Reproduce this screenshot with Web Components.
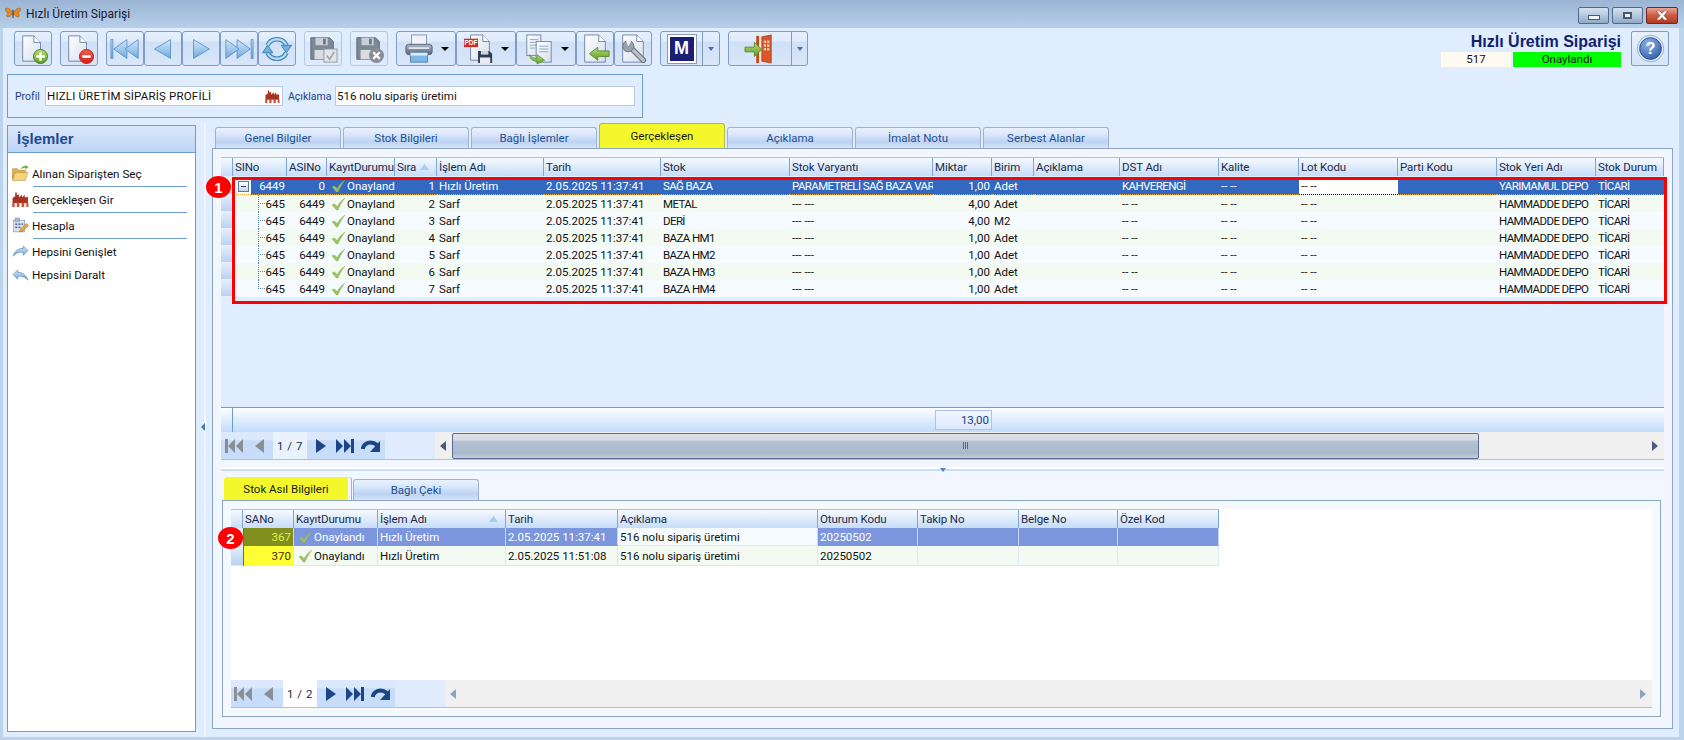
<!DOCTYPE html>
<html lang="tr">
<head>
<meta charset="utf-8">
<title>Hızlı Üretim Siparişi</title>
<style>
    html, body { margin: 0; padding: 0; }
    body {
        width: 1684px;
        height: 740px;
        overflow: hidden;
        position: relative;
        background: #e0edfe;
        font-family: Roboto, "Liberation Sans", Arial, sans-serif;
        font-size: 11.5px;
        color: #111;
    }
</style>
</head>
<body>
<app-window></app-window>
<mark-box x="232" y="177" w="1435" h="127"></mark-box>
<mark-badge x="206" y="176" n="1"></mark-badge>
<mark-badge x="218" y="527" n="2"></mark-badge>

<script>
const DEFS = `<defs>
<linearGradient id="doc" x1="0" y1="0" x2="1" y2="1"><stop offset="0" stop-color="#fff"/><stop offset="1" stop-color="#d5dfec"/></linearGradient>
<linearGradient id="blue" x1="0" y1="0" x2="0" y2="1"><stop offset="0" stop-color="#d4e8fa"/><stop offset="1" stop-color="#6fa9dc"/></linearGradient>
<linearGradient id="green" x1="0" y1="0" x2="0" y2="1"><stop offset="0" stop-color="#b9dc72"/><stop offset="1" stop-color="#5f9c2c"/></linearGradient>
<linearGradient id="red" x1="0" y1="0" x2="0" y2="1"><stop offset="0" stop-color="#f4604c"/><stop offset="1" stop-color="#d81a14"/></linearGradient>
<linearGradient id="steel" x1="0" y1="0" x2="0" y2="1"><stop offset="0" stop-color="#aeb8c6"/><stop offset="1" stop-color="#56657a"/></linearGradient>
<radialGradient id="ball" cx=".4" cy=".3" r=".8"><stop offset="0" stop-color="#8fb4e8"/><stop offset="1" stop-color="#2a5aa8"/></radialGradient>
</defs>`;

const docShape = (x, y, w, h) => `<path d="M${x} ${y}h${w - 7}l7 7v${h - 7}h-${w}z" fill="url(#doc)" stroke="#6d84a8"/><path d="M${x + w - 7} ${y}v7h7" fill="#fff" stroke="#6d84a8"/>`;
const floppy = `<path d="M3 4h20l4 4v19H3z" fill="#7c8894" stroke="#5f6a75"/><rect x="8" y="4" width="13" height="8" fill="#c9d0d8"/><rect x="16" y="5" width="3" height="6" fill="#6a7682"/><rect x="7" y="17" width="16" height="10" fill="#d9dde2"/>`;
const fwd = `<path d="M1 12C3 6 8 3 12 4V1l5 5-5 5V8C8 7 4 9 1 12z" fill="url(#blue)" stroke="#5f8fc4" stroke-width=".8"/>`;

const ICONS = {
    butterfly: `<path d="M15 15C12 6 6 3 1 5c0 5 2 8 6 9-3 1-4 4-3 7 4 2 8-1 11-6z" fill="#e88a1c" stroke="#8a4a10" stroke-width="1"/><path d="M17 15C20 6 26 3 31 5c0 5-2 8-6 9 3 1 4 4 3 7-4 2-8-1-11-6z" fill="#e88a1c" stroke="#8a4a10" stroke-width="1"/><rect x="15" y="7" width="2" height="17" rx="1" fill="#3a2a18"/>`,
    add: docShape(5, 2, 19, 27) + `<circle cx="24" cy="24" r="7.500" fill="url(#green)" stroke="#4a7a20"/><path d="M24 19.500v9M19.500 24h9" stroke="#fff" stroke-width="2.600"/>`,
    remove: docShape(5, 2, 19, 27) + `<circle cx="24" cy="24" r="7.500" fill="url(#red)" stroke="#b02018"/><path d="M19.500 24h9" stroke="#fff" stroke-width="2.800"/>`,
    first: `<g fill="url(#blue)" stroke="#5b96cc"><rect x="1" y="6" width="2" height="20"/><path d="M4 16 18 6v20z"/><path d="M16 16 30 6v20z"/></g>`,
    prev: `<path d="M7 16 24 6v20z" fill="url(#blue)" stroke="#5b96cc"/>`,
    next: `<path d="M25 16 8 6v20z" fill="url(#blue)" stroke="#5b96cc"/>`,
    last: `<g fill="url(#blue)" stroke="#5b96cc"><rect x="29" y="6" width="2" height="20"/><path d="M28 16 14 6v20z"/><path d="M16 16 2 6v20z"/></g>`,
    refresh: `<g fill="none" stroke-linecap="butt"><path d="M6 12A11 11 0 0 1 26 12" stroke="#3b7fb5" stroke-width="5"/><path d="M26 20A11 11 0 0 1 6 20" stroke="#3b7fb5" stroke-width="5"/><path d="M6 12A11 11 0 0 1 26 12" stroke="#b5daf2" stroke-width="2.500"/><path d="M26 20A11 11 0 0 1 6 20" stroke="#b5daf2" stroke-width="2.500"/></g><path d="M20.500 12h11L26 20z" fill="#6fb0e0" stroke="#3b7fb5"/><path d="M.5 20h11L6 12z" fill="#6fb0e0" stroke="#3b7fb5"/>`,
    savecheck: floppy + `<rect x="17" y="16" width="14" height="14" fill="#e2e5e8" stroke="#8f979f"/><path d="M20 23l3 4 5-8" fill="none" stroke="#9aa2aa" stroke-width="1.600"/>`,
    savex: floppy + `<circle cx="24" cy="23" r="8" fill="#858d95"/><path d="M20.500 19.500l7 7M27.500 19.500l-7 7" stroke="#fff" stroke-width="2.500"/>`,
    print: `<rect x="8" y="1" width="16" height="11" fill="#f0f3f7" stroke="#8395ad"/><rect x="2" y="11" width="28" height="11" rx="3" fill="url(#steel)" stroke="#56657a"/><rect x="5" y="14" width="22" height="2" fill="#dfe5ec"/><rect x="7" y="20" width="18" height="10" fill="#7ab8ea" stroke="#5b7fa8"/><rect x="7" y="20" width="18" height="3" fill="#dcebf8"/>`,
    pdf: docShape(7, 1, 20, 27) + `<rect x="0" y="5" width="15" height="9" fill="#d42a24"/><text x="7.500" y="12" font-family="Liberation Sans" font-size="7" font-weight="700" fill="#fff" text-anchor="middle">PDF</text><path d="M15 18h12l3 3v10H15z" fill="#2f3a4c"/><rect x="18" y="18" width="8" height="4" fill="#cdd5df"/><rect x="17" y="25" width="11" height="6" fill="#e8ecf0"/>`,
    copy: `<rect x="3" y="1" width="15" height="22" fill="url(#doc)" stroke="#7088ab"/><path d="M6 6h9M6 9h9M6 12h9M6 15h6" stroke="#8fa6c6"/><rect x="13" y="8" width="16" height="22" fill="url(#doc)" stroke="#7088ab"/><path d="M16 13h10M16 16h10M16 19h10" stroke="#8fa6c6"/><path d="M6 22c2 3 4 4 8 4v-4l8 6-8 4v-3c-5 0-8-3-8-7z" fill="url(#green)" stroke="#5d8c2c" stroke-width=".8"/>`,
    back: docShape(5, 1, 22, 29) + `<path d="M10 21l9-7v4h12v6H19v4z" fill="url(#green)" stroke="#5d8c2c"/>`,
    wrench: docShape(5, 1, 22, 29) + `<path d="M13 14l14 14" stroke="#6a7480" stroke-width="6" stroke-linecap="round"/><path d="M13 14l14 14" stroke="#b8c0c8" stroke-width="3.500" stroke-linecap="round"/><circle cx="11" cy="13" r="6" fill="#98a2ac" stroke="#6a7480"/><path d="M11 13 8 6h7z" fill="#eef3fa"/>`,
    door: `<rect x="12" y="2" width="3" height="29" fill="#c2471f"/><rect x="15" y="3" width="3" height="26" fill="#f0e4d0"/><path d="M18 3l10-2v30l-10-2z" fill="#d9552a" stroke="#a83a18" stroke-width=".8"/><g fill="#e2d4b4"><rect x="20" y="7" width="2.500" height="2.500"/><rect x="23.500" y="7" width="2.500" height="2.500"/><rect x="20" y="11" width="2.500" height="2.500"/><rect x="23.500" y="11" width="2.500" height="2.500"/><rect x="20" y="15" width="2.500" height="2.500"/><rect x="23.500" y="15" width="2.500" height="2.500"/></g><path d="M0 14h10V9l8 7.500-8 7.500v-5H0z" fill="url(#green)" stroke="#5d8c2c"/>`,
    help: `<circle cx="16" cy="16" r="14.500" fill="#e6eef8" stroke="#8fa8c8"/><circle cx="16" cy="16" r="12" fill="url(#ball)" stroke="#2a4f90"/><text x="16" y="22" font-family="Liberation Sans" font-size="18" font-weight="700" fill="#fff" text-anchor="middle">?</text>`,
    factory: `<path d="M1 30V13l5-3V3h3v5l4-2v6l6-5v5l5-5v5l6-1v19z" fill="#a83222"/><rect x="1" y="22" width="30" height="8" fill="#c8553e"/><g fill="#fff"><rect x="5" y="23" width="4" height="7"/><rect x="14" y="23" width="4" height="7"/><rect x="23" y="23" width="4" height="7"/></g>`,
    folder: `<path d="M1 7h9l2 3h13v5H6L1 27z" fill="#e2b24c" stroke="#a87a20"/><path d="M6 14h24l-5 15H1z" fill="#f6d47e" stroke="#b88a2c"/><path d="M17 8c1-4 4-6 8-6V0l6 4-6 4V5c-3 0-6 1-8 3z" fill="#6fa836"/>`,
    calc: `<rect x="3" y="6" width="21" height="22" fill="#dbe4f2" stroke="#6d7fa0"/><rect x="6" y="2" width="8" height="6" fill="#aebbd0" stroke="#6d7fa0"/><g fill="#5a6f98"><rect x="6" y="12" width="4" height="3"/><rect x="12" y="12" width="4" height="3"/><rect x="18" y="12" width="3" height="3"/><rect x="6" y="18" width="4" height="3"/><rect x="12" y="18" width="4" height="3"/></g><path d="M14 28l2-5 11-11 4 4-11 11z" fill="#e8a83c" stroke="#9a6a18"/>`,
    expand: fwd,
    collapse: `<g transform="matrix(-1 0 0 1 18 0)">${fwd}</g>`,
    check: `<path d="M1 8l3-1 3 3c2-4 5-7 9-10-3 4-6 9-8 14H6z" fill="#9cc266" stroke="#7fa648" stroke-width=".4"/>`,
    navfirst: `<path d="M0 0h3v14H0zM3 7l7-7v14zM11 7l7-7v14z"/>`,
    navprev: `<path d="M0 7l9-7v14z"/>`,
    navnext: `<path d="M0 0l10 7-10 7z"/>`,
    navlast: `<path d="M0 0l7 7-7 7zM8 0l7 7-7 7zM15 0h3v14h-3z"/>`,
    navrefresh: `<path d="M1.800 10C2.500 4 10 1 16 6" fill="none" stroke="currentColor" stroke-width="4"/><path d="M9 13h10V2z"/>`
};

const VIEWBOX = { check: "0 0 16 14", expand: "0 0 18 14", collapse: "0 0 18 14", navfirst: "0 0 18 14", navprev: "0 0 9 14", navnext: "0 0 10 14", navlast: "0 0 18 14", navrefresh: "0 0 19 14" };

class AppIcon extends HTMLElement {
    connectedCallback() {
        const name = this.getAttribute("name");
        const w = this.getAttribute("w") || 32;
        const h = this.getAttribute("h") || w;
        const box = VIEWBOX[name] || "0 0 32 32";
        this.attachShadow({ mode: "open" }).innerHTML = `
            <style>
                :host { display: inline-flex; flex: none; }
                svg { display: block; overflow: visible; }
            </style>
            <svg xmlns="http://www.w3.org/2000/svg" width="${w}" height="${h}" viewBox="${box}" fill="currentColor">${DEFS}${ICONS[name]}</svg>`;
    }
}
customElements.define("app-icon", AppIcon);

class TitleBar extends HTMLElement {
    constructor() {
        super();
        this.attachShadow({ mode: "open" }).innerHTML = `
            <style>
                :host {
                    display: flex;
                    align-items: center;
                    gap: 5px;
                    height: 28px;
                    padding: 0 6px 0 5px;
                    box-sizing: border-box;
                    background: linear-gradient(#9bb4d3, #b6cfe9);
                    font-size: 12px;
                    color: #1a1a2a;
                }
                .name { flex: 1; }
                .ctl { display: flex; gap: 3px; margin-top: 3px; }
                .ctl span {
                    width: 31px; height: 17px; box-sizing: border-box;
                    border: 1px solid #4f6a8c; border-radius: 2px;
                    background: linear-gradient(#d4e1ef, #b4c9df 50%, #8fa9c6);
                    display: flex; align-items: center; justify-content: center;
                }
                .ctl i { display: block; }
                .min i { width: 10px; height: 3px; margin-top: 4px; background: #eef3f8; border: 1px solid #4a5a70; }
                .max i { width: 5px; height: 3px; border: 2px solid #4a5a70; background: #eef3f8; }
                .ctl .close { width: 32px; background: linear-gradient(#e8a595, #cf5a42 50%, #b23a22); border-color: #6e2a1c; }
            </style>
            <app-icon name="butterfly" w="16"></app-icon>
            <span class="name">Hızlı Üretim Siparişi</span>
            <div class="ctl">
                <span class="min"><i></i></span>
                <span class="max"><i></i></span>
                <span class="close">
                    <svg width="14" height="9" viewBox="0 0 14 9"><path d="M1 0h4l2 2.500L9 0h4L9 4.500 13 9H9L7 6.500 5 9H1l4-4.500z" fill="#fff" stroke="#5a3a30" stroke-width=".6"/></svg>
                </span>
            </div>`;
    }
}
customElements.define("title-bar", TitleBar);

class ToolButton extends HTMLElement {
    connectedCallback() {
        const icon = this.getAttribute("icon");
        const w = this.getAttribute("w") || 38;
        const caret = this.getAttribute("caret");
        const split = this.getAttribute("split");
        const size = this.getAttribute("size") || 30;
        this.attachShadow({ mode: "open" }).innerHTML = `
            <style>
                :host {
                    display: flex;
                    width: ${w}px;
                    height: 35px;
                    box-sizing: border-box;
                    border: 1px solid #7f9cc6;
                    border-radius: 3px;
                    background: linear-gradient(#e6f0fd, #deebfb 28%, #cfe0f6 30%, #d9e6f9);
                    align-items: center;
                    justify-content: center;
                }
                :host([disabled]) {
                    border-color: #b7c8e0;
                    background: linear-gradient(#e6f0fd, #e1edfd 30%, #d9e7fa 32%, #e0ecfd);
                }
                .main { flex: 1; display: flex; align-items: center; justify-content: center; height: 100%; }
                .caret { width: 0; height: 0; border: 4px solid transparent; border-top: 4px solid #000; border-bottom: 0; margin: 0 6px 0 0; }
                .split { width: 15px; height: 100%; border-left: 1px solid #7f9cc6; display: flex; align-items: center; justify-content: center; }
                .split i { width: 0; height: 0; border: 3px solid transparent; border-top: 4px solid #4a6ea5; border-bottom: 0; }
            </style>
            <div class="main"><app-icon name="${icon}" w="${size}"></app-icon></div>
            ${caret !== null ? '<div class="caret"></div>' : ""}
            ${split !== null ? '<div class="split"><i></i></div>' : ""}`;
    }
}
customElements.define("tool-button", ToolButton);

class MarkButton extends HTMLElement {
    constructor() {
        super();
        this.attachShadow({ mode: "open" }).innerHTML = `
            <style>
                :host { display: flex; width: 30px; height: 30px; box-sizing: border-box; border: 1px solid #8a9ab8; padding: 2px; background: #fff; }
                div { flex: 1; background: #1a1f71; color: #fff; font: bold 18px "Liberation Sans", sans-serif; display: flex; align-items: center; justify-content: center; }
            </style>
            <div>M</div>`;
    }
}
customElements.define("mark-button", MarkButton);

class ToolGroup extends HTMLElement {
    constructor() {
        super();
        this.attachShadow({ mode: "open" }).innerHTML = `<style>:host { display: flex; }</style><slot></slot>`;
    }
}
customElements.define("tool-group", ToolGroup);

class ProfilePanel extends HTMLElement {
    constructor() {
        super();
        this.attachShadow({ mode: "open" }).innerHTML = `
            <style>
                :host {
                    display: flex;
                    align-items: center;
                    width: 636px;
                    height: 44px;
                    box-sizing: border-box;
                    margin: 8px 0 0 4px;
                    padding: 0 7px;
                    border: 1px solid #6f9bd3;
                }
                label { color: #1f3f86; white-space: nowrap; font-size: 10.5px; }
                .lp { width: 30px; }
                .la { width: 47px; margin-left: 5px; }
                .box {
                    height: 20px; box-sizing: border-box;
                    border: 1px solid #b8cce6; background: #fff;
                    display: flex; align-items: center; padding: 0 2px 0 1px;
                    color: #111;
                }
                .p { width: 238px; justify-content: space-between; }
                .p span { letter-spacing: .18px; }
                .a { width: 300px; }
            </style>
            <label class="lp">Profil</label>
            <div class="box p"><span>HIZLI ÜRETİM SİPARİŞ PROFİLİ</span><app-icon name="factory" w="15"></app-icon></div>
            <label class="la">Açıklama</label>
            <div class="box a">516 nolu sipariş üretimi</div>`;
    }
}
customElements.define("profile-panel", ProfilePanel);

class StatusHead extends HTMLElement {
    constructor() {
        super();
        this.attachShadow({ mode: "open" }).innerHTML = `
            <style>
                :host { display: flex; gap: 10px; margin: 3px 10px 0 0; align-items: flex-start; }
                .col { display: flex; flex-direction: column; align-items: flex-end; }
                h1 { margin: 0; height: 21px; line-height: 21px; font: bold 16px/21px "Liberation Sans", sans-serif; color: #101f70; }
                .row { display: flex; gap: 2px; }
                .row div { height: 15px; line-height: 15px; text-align: center; color: #111; }
                .no { width: 70px; background: #fffaf0; }
                .st { width: 108px; background: #00ff00; }
                .help {
                    width: 38px; height: 35px; box-sizing: border-box;
                    border: 1px solid #7f9cc6; border-radius: 2px;
                    background: linear-gradient(#e6f0fd, #d5e4f8);
                    display: flex; align-items: center; justify-content: center;
                }
            </style>
            <div class="col">
                <h1>Hızlı Üretim Siparişi</h1>
                <div class="row"><div class="no">517</div><div class="st">Onaylandı</div></div>
            </div>
            <div class="help"><app-icon name="help" w="29"></app-icon></div>`;
    }
}
customElements.define("status-head", StatusHead);

class SidePanel extends HTMLElement {
    constructor() {
        super();
        this.attachShadow({ mode: "open" }).innerHTML = `
            <style>
                :host {
                    display: flex; flex-direction: column;
                    width: 189px; height: 607px; box-sizing: border-box;
                    margin: 2px 0 0 4px;
                    border: 1px solid #6f9bd3;
                    background: #fff;
                }
                h2 {
                    margin: 0; height: 27px; padding-left: 9px; box-sizing: border-box;
                    font: bold 15px/26px "Liberation Sans", sans-serif; color: #1f4a8e;
                    background: linear-gradient(#dbe8fc, #bcd4f4);
                    border-bottom: 1px solid #6f9bd3;
                }
                .list { padding-top: 8px; }
            </style>
            <h2>İşlemler</h2>
            <div class="list"><slot></slot></div>`;
    }
}
customElements.define("side-panel", SidePanel);

class SideItem extends HTMLElement {
    connectedCallback() {
        const icon = this.getAttribute("icon");
        const small = icon === "expand" || icon === "collapse";
        this.attachShadow({ mode: "open" }).innerHTML = `
            <style>
                :host { display: block; height: ${this.getAttribute("h") || 26}px; box-sizing: border-box; font-size: 11.7px; }
                .row { display: flex; align-items: center; height: 25px; padding-left: 3px; gap: 3px; }
                :host([last]) .row { height: 20px; }
                .ic { width: 18px; display: flex; justify-content: center; }
                hr { margin: 0 8px 0 25px; border: 0; border-top: 1px solid #6f9bd3; }
            </style>
            <div class="row">
                <span class="ic"><app-icon name="${icon}" w="17" h="${small ? 13 : 17}"></app-icon></span>
                <slot></slot>
            </div>
            ${this.hasAttribute("sep") ? "<hr>" : ""}`;
    }
}
customElements.define("side-item", SideItem);

class TabStrip extends HTMLElement {
    constructor() {
        super();
        this.attachShadow({ mode: "open" }).innerHTML = `
            <style>
                :host { display: flex; align-items: flex-end; gap: 2px; box-sizing: border-box; }
            </style>
            <slot></slot>`;
    }
}
customElements.define("tab-strip", TabStrip);

class TabItem extends HTMLElement {
    constructor() {
        super();
        this.attachShadow({ mode: "open" }).innerHTML = `
            <style>
                :host {
                    display: flex; align-items: center; justify-content: center;
                    width: 126px; height: 21px; box-sizing: border-box;
                    border: 1px solid #9ab3d4; border-bottom: 0; border-radius: 3px 3px 0 0;
                    background: linear-gradient(#e9f2fe, #dbe8fb 30%, #bdd3f2 70%, #d5e4f8);
                    color: #1f4f91;
                }
                :host([active]) {
                    height: 25px;
                    background: #f4f72c;
                    border-color: #b5b74a;
                    color: #1a1a1a;
                }
                :host([low]) { height: 23px; width: 127px; border: 0; border-right: 3px solid #f2f7ff; box-shadow: 1px 0 0 #9ab3d4; }
            </style>
            <slot></slot>`;
    }
}
customElements.define("tab-item", TabItem);

const upperCols = [
    ["SINo", 54], ["ASINo", 40], ["KayıtDurumu", 68], ["Sıra", 42, "sort"], ["İşlem Adı", 107], ["Tarih", 117], ["Stok", 129], ["Stok Varyantı", 143],
    ["Miktar", 59], ["Birim", 42], ["Açıklama", 86], ["DST Adı", 99], ["Kalite", 80], ["Lot Kodu", 99], ["Parti Kodu", 99], ["Stok Yeri Adı", 99], ["Stok Durum", 68]
];
const lowerCols = [
    ["SANo", 51], ["KayıtDurumu", 84], ["İşlem Adı", 128, "sort"], ["Tarih", 112], ["Açıklama", 200], ["Oturum Kodu", 100], ["Takip No", 101], ["Belge No", 99], ["Özel Kod", 101]
];
const sarf = (sira, stok, miktar, birim) => ["645", "6449", "Onayland", String(sira), "Sarf", "2.05.2025 11:37:41", stok, "--- ---", miktar, birim, "", "-- --", "-- --", "-- --", "", "HAMMADDE DEPO", "TİCARİ"];
const GRIDS = {
    upper: {
        cols: upperCols,
        rowHeight: 17,
        right: [0, 1, 3, 8],
        checkCol: 2,
        treeCol: 0,
        rows: [
            ["6449", "0", "Onayland", "1", "Hızlı Üretim", "2.05.2025 11:37:41", "SAĞ BAZA", "PARAMETRELİ SAĞ BAZA VAR", "1,00", "Adet", "", "KAHVERENGİ", "-- --", "-- --", "", "YARIMAMUL DEPO", "TİCARİ"],
            sarf(2, "METAL", "4,00", "Adet"),
            sarf(3, "DERİ", "4,00", "M2"),
            sarf(4, "BAZA HM1", "1,00", "Adet"),
            sarf(5, "BAZA HM2", "1,00", "Adet"),
            sarf(6, "BAZA HM3", "1,00", "Adet"),
            sarf(7, "BAZA HM4", "1,00", "Adet")
        ],
        selected: 0,
        focusCol: 13
    },
    lower: {
        cols: lowerCols,
        rowHeight: 18,
        right: [0],
        checkCol: 1,
        yellowCol: 0,
        rows: [
            ["367", "Onaylandı", "Hızlı Üretim", "2.05.2025 11:37:41", "516 nolu sipariş üretimi", "20250502", "", "", ""],
            ["370", "Onaylandı", "Hızlı Üretim", "2.05.2025 11:51:08", "516 nolu sipariş üretimi", "20250502", "", "", ""]
        ],
        selected: 0,
        focusCol: 4,
        grid: true
    }
};

// Upper-case names come out wider in Roboto than in the original, so they get tighter spacing
const isCaps = text => /[A-ZÇĞİÖŞÜ]{2}/.test(text) && text === text.toLocaleUpperCase("tr");

class DataGrid extends HTMLElement {
    connectedCallback() {
        const g = GRIDS[this.getAttribute("config")];
        const tpl = "12px " + g.cols.map(c => c[1] + "px").join(" ");
        const head = g.cols.map(c => `<div class="hc">${c[0]}${c[2] ? '<svg class="sort" width="9" height="6" viewBox="0 0 9 6"><path d="M4.500 0 9 6H0z" fill="#a9cbee"/></svg>' : ""}</div>`).join("");
        const rows = g.rows.map((row, r) => {
            const cls = r === g.selected ? "sel" : (r % 2 ? "alt" : "plain");
            const cells = row.map((text, c) => {
                let k = "c";
                let inner = `<span class="t${isCaps(text) ? " caps" : ""}">${text}</span>`;
                if (g.right.includes(c)) k += " r";
                if (c === g.focusCol && r === g.selected) k += " focus";
                if (c === g.yellowCol) k += " yellow";
                if (c === g.checkCol) {
                    k += " chk";
                    inner = `<app-icon name="check" w="14" h="12"></app-icon>${inner}`;
                }
                if (c === g.treeCol) {
                    k += r === g.selected ? " root" : " leaf";
                    if (r === g.selected) inner = `<i class="box"></i>${inner}`;
                    else inner = `<i class="tree${r === g.rows.length - 1 ? " end" : ""}"></i>${inner}`;
                }
                return `<div class="${k}">${inner}</div>`;
            }).join("");
            return `<div class="row ${cls}"><div class="ind"></div>${cells}</div>`;
        }).join("");
        const foot = this.hasAttribute("foot") ? `
            <div class="foot"><div class="fi"></div>${g.cols.map((c, i) => `<div class="${i === 8 ? "sum" : ""}">${i === 8 ? "13,00" : ""}</div>`).join("")}</div>` : "";
        this.attachShadow({ mode: "open" }).innerHTML = `
            <style>
                :host {
                    display: flex; flex-direction: column;
                    box-sizing: border-box;
                    height: ${this.getAttribute("h")}px;
                    background: ${this.getAttribute("bg") || "#e0edfe"};
                    overflow: hidden;
                    --tpl: ${tpl};
                }
                .head, .row, .foot { display: grid; grid-template-columns: var(--tpl); }
                .head { height: 19px; width: max-content; background: linear-gradient(#f6faff, #c6dcf8); border-top: 1px solid #a8c2e4; box-sizing: border-box; flex: none; }
                .hi { border-right: 1px solid #7fa6d8; }
                .hc { display: flex; align-items: center; justify-content: space-between; padding: 0 7px 0 2px; border-right: 1px solid #7fa6d8; color: #1a2a4a; white-space: nowrap; overflow: hidden; letter-spacing: -.1px; }
                .sort { flex: none; }
                .rows { padding-top: ${g.grid ? 0 : 2}px; flex: none; }
                .row { height: ${g.rowHeight}px; }
                .ind { background: linear-gradient(#e5eefb, #b9d2f3); border-bottom: 1px solid #e8f1fd; }
                .c { display: flex; align-items: center; padding: 0 2px; overflow: hidden; white-space: nowrap; box-sizing: border-box; }
                .c.r { justify-content: flex-end; }
                .c.chk { padding-left: 4px; gap: 2px; }
                .t { flex: none; }
                .t.caps { letter-spacing: -.6px; }
                .plain .c { background: #f6fbff; }
                .alt .c { background: #f2faf2; }
                .sel .c { background: #3268c0; color: #fff; border-bottom: 1px dotted #e8a13c; }
                .sel .c.focus { background: #fff; color: #111; border-bottom: 1px dotted #000; }
                .sel .c.root { background: linear-gradient(90deg, #f6fbff 18px, #3268c0 18px); border-bottom: 1px dotted #e8a13c; justify-content: flex-end; }
                .box { width: 9px; height: 9px; margin-right: auto; margin-left: 3px; border: 1px solid #5a7aa5; background: linear-gradient(90deg, transparent 2px, #25416e 2px, #25416e 7px, transparent 7px) center / 100% 1px no-repeat, linear-gradient(#fff, #c9d6e8); }
                .leaf { justify-content: flex-end; }
                .tree { width: 8px; height: 100%; flex: none; align-self: stretch;
                    background:
                        repeating-linear-gradient(#5a80b0 0 1px, transparent 1px 2px) left top / 1px 100% no-repeat,
                        repeating-linear-gradient(90deg, #5a80b0 0 1px, transparent 1px 2px) left 8px / 100% 1px no-repeat; }
                .tree.end { background:
                        repeating-linear-gradient(#5a80b0 0 1px, transparent 1px 2px) left top / 1px 9px no-repeat,
                        repeating-linear-gradient(90deg, #5a80b0 0 1px, transparent 1px 2px) left 8px / 100% 1px no-repeat; }
                .leaf .tree { margin-left: 25px; margin-right: auto; }
                ${g.grid ? `
                .row .c { border-right: 1px solid #dbe8fb; border-bottom: 1px solid #dbe8fb; }
                .sel .c { background: #7b96dc; border-bottom: 1px solid #7b96dc; border-right-color: #c8d6f2; }
                .sel .c.focus { background: #f6fbff; color: #111; border-bottom: 1px solid #dbe8fb; }
                .c.yellow { background: #ffff33; color: #4a2a10; border-left: 1px solid #5a7a3a; }
                .alt .c.yellow { height: 20px; border-bottom: 0; }
                .sel .c.yellow { background: #808f1e; color: #e8ee4a; border-bottom: 0; }
                .row { box-sizing: border-box; }
                .ind { border-bottom: 1px solid #dbe8fb; }
                ` : ""}
                .fill { flex: 1; border-bottom: ${this.hasAttribute("foot") ? "1px solid #6f9bd3" : "0"}; }
                .foot { height: 24px; box-sizing: border-box; flex: none; background: linear-gradient(#fdfeff, #c3dbfb); }
                .fi { border-right: 1px solid #6f9bd3; }
                .sum { margin: 2px 0 2px 2px; box-sizing: border-box; border: 1px solid #a9c4e8; background: linear-gradient(#f0f6ff, #dce9fc); color: #1e3a8a; text-align: right; padding-right: 2px; line-height: 18px; }
            </style>
            <div class="head"><div class="hi"></div>${head}</div>
            <div class="rows">${rows}</div>
            <div class="fill"></div>
            ${foot}
            <slot></slot>`;
    }
}
customElements.define("data-grid", DataGrid);

class GridNav extends HTMLElement {
    connectedCallback() {
        const dim = this.hasAttribute("dim");
        this.attachShadow({ mode: "open" }).innerHTML = `
            <style>
                :host { display: flex; height: 28px; flex: none; box-sizing: border-box; border-bottom: 1px solid #a9c0de; background: #e0ecfd; }
                .grp { display: flex; align-items: center; box-sizing: border-box; background: linear-gradient(#dce9fc 30%, #c6dcf8 32%, #c8ddf8); }
                .a { width: 52px; padding-left: ${dim ? 3 : 4}px; gap: 12px; color: #8a8f95; }
                .p { width: 34px; display: flex; align-items: center; justify-content: center; background: ${dim ? "#fff" : "#eaf2fe"}; color: #1a2a4a; letter-spacing: .5px; }
                .b { width: 78px; padding-left: 9px; gap: 10px; color: #1c4587; }
                .b app-icon:last-child { margin-left: -3px; }
                .gap { width: 50px; }
                .track { flex: 1; display: flex; align-items: center; background: #f0f0f0; color: ${dim ? "#8fa0c4" : "#4a5a80"}; padding: 0 6px 0 5px; box-sizing: border-box; }
                .thumb {
                    width: 1027px; height: 26px; margin-left: 6px; box-sizing: border-box;
                    border: 1px solid #5a6a96; border-radius: 2px;
                    background: linear-gradient(#dfe2e6, #d7dade 25%, #b4c2d6 30%, #a9b9cc 80%, #c4ced9);
                    display: flex; align-items: center; justify-content: center;
                }
                .grip { width: 6px; height: 7px; background: repeating-linear-gradient(90deg, #5a6a80 0 1px, transparent 1px 2px); }
                .end { margin-left: auto; }
            </style>
            <div class="grp a"><app-icon name="navfirst" w="18" h="14"></app-icon><app-icon name="navprev" w="9" h="14"></app-icon></div>
            <div class="p">${this.getAttribute("pos")}</div>
            <div class="grp b"><app-icon name="navnext" w="10" h="14"></app-icon><app-icon name="navlast" w="18" h="14"></app-icon><app-icon name="navrefresh" w="19" h="14"></app-icon></div>
            <div class="gap"></div>
            <div class="track">
                <svg width="6" height="10" viewBox="0 0 6 10"><path d="M6 0v10L0 5z" fill="currentColor"/></svg>
                ${dim ? "" : '<div class="thumb"><div class="grip"></div></div>'}
                <svg class="end" width="6" height="10" viewBox="0 0 6 10"><path d="M0 0v10l6-5z" fill="currentColor"/></svg>
            </div>`;
    }
}
customElements.define("grid-nav", GridNav);

class SplitBar extends HTMLElement {
    constructor() {
        super();
        this.attachShadow({ mode: "open" }).innerHTML = `
            <style>
                :host { display: flex; flex: none; height: 17px; align-items: flex-start; justify-content: center; }
                div { width: 100%; height: 4px; margin-top: 7px; display: flex; justify-content: center; background: linear-gradient(#fff 50%, #c8dffa 50%); }
                i { width: 0; height: 0; margin-top: 1px; border: 3px solid transparent; border-top: 4px solid #5a80b8; border-bottom: 0; }
            </style>
            <div><i></i></div>`;
    }
}
customElements.define("split-bar", SplitBar);

class MarkBox extends HTMLElement {
    connectedCallback() {
        const a = n => this.getAttribute(n);
        this.attachShadow({ mode: "open" }).innerHTML = `
            <style>
                :host { position: absolute; left: ${a("x")}px; top: ${a("y")}px; width: ${a("w")}px; height: ${a("h")}px; box-sizing: border-box; border: 3px solid #f00; }
            </style>`;
    }
}
customElements.define("mark-box", MarkBox);

class MarkBadge extends HTMLElement {
    connectedCallback() {
        const a = n => this.getAttribute(n);
        this.attachShadow({ mode: "open" }).innerHTML = `
            <style>
                :host { position: absolute; left: ${a("x")}px; top: ${a("y")}px; width: 25px; height: 22px; border-radius: 50%; background: #f00; color: #fff; font: bold 15px "Liberation Sans", sans-serif; display: flex; align-items: center; justify-content: center; }
            </style>${a("n")}`;
    }
}
customElements.define("mark-badge", MarkBadge);

class MarkSplit extends HTMLElement {
    constructor() {
        super();
        this.attachShadow({ mode: "open" }).innerHTML = `
            <style>
                :host {
                    display: flex; width: 60px; height: 35px; box-sizing: border-box;
                    border: 1px solid #7f9cc6; border-radius: 3px;
                    background: linear-gradient(#e6f0fd, #deebfb 28%, #cfe0f6 30%, #d9e6f9);
                }
                .main { flex: 1; display: flex; align-items: center; justify-content: center; }
                .split { width: 16px; border-left: 1px solid #7f9cc6; display: flex; align-items: center; justify-content: center; }
                .split i { width: 0; height: 0; border: 3px solid transparent; border-top: 4px solid #4a6ea5; border-bottom: 0; }
            </style>
            <div class="main"><mark-button></mark-button></div>
            <div class="split"><i></i></div>`;
    }
}
customElements.define("mark-split", MarkSplit);

class AppWindow extends HTMLElement {
    constructor() {
        super();
        this.attachShadow({ mode: "open" }).innerHTML = `
            <style>
                :host { display: flex; flex-direction: column; width: 1684px; height: 740px; }
                .frame {
                    flex: 1; display: flex; flex-direction: column; min-height: 0;
                    border-left: 3px solid #bcd3ec; border-right: 5px solid #bcd3ec; border-bottom: 3px solid #bcd3ec;
                    background: #e0edfe;
                }
                .top { display: flex; justify-content: space-between; height: 95px; flex: none; }
                .tools { display: flex; gap: 8px; margin: 3px 0 0 11px; }
                .body { flex: 1; display: flex; min-height: 0; }
                .grip {
                    width: 16px; flex: none; display: flex; justify-content: flex-end; padding: 300px 7px 0 0; box-sizing: border-box; height: 100%;
                    background: linear-gradient(90deg, transparent 8px, #f2f7ff 8px, #f2f7ff 10px, transparent 10px);
                    color: #4a7ab8;
                }
                .main { width: 1461px; height: 606px; display: flex; flex-direction: column; }
                .main > tab-strip { height: 25px; padding-left: 3px; flex: none; }
                .panel {
                    flex: 1; min-height: 0; box-sizing: border-box; display: flex; flex-direction: column;
                    border: 1px solid #8ba4c8; background: #f2f7ff; padding: 8px 8px 0 8px;
                }
                .lower { margin: 0 3px 0 1px; display: flex; flex-direction: column; }
                .lower tab-strip { height: 23px; padding-left: 2px; flex: none; }
                .sub { height: 217px; box-sizing: border-box; border: 1px solid #8ba4c8; background: #f4f8ff; padding: 8px; }
            </style>
            <title-bar></title-bar>
            <div class="frame">
                <div class="top">
                    <div>
                        <div class="tools">
                            <tool-button icon="add"></tool-button>
                            <tool-button icon="remove"></tool-button>
                            <tool-group>
                                <tool-button icon="first"></tool-button>
                                <tool-button icon="prev"></tool-button>
                                <tool-button icon="next"></tool-button>
                                <tool-button icon="last"></tool-button>
                                <tool-button icon="refresh"></tool-button>
                            </tool-group>
                            <tool-button icon="savecheck" disabled></tool-button>
                            <tool-button icon="savex" disabled></tool-button>
                            <tool-group>
                                <tool-button icon="print" w="60" caret></tool-button>
                                <tool-button icon="pdf" w="60" caret></tool-button>
                                <tool-button icon="copy" w="60" caret></tool-button>
                                <tool-button icon="back"></tool-button>
                                <tool-button icon="wrench"></tool-button>
                            </tool-group>
                            <mark-split></mark-split>
                            <tool-button icon="door" w="80" split></tool-button>
                        </div>
                        <profile-panel></profile-panel>
                    </div>
                    <status-head></status-head>
                </div>
                <div class="body">
                    <side-panel>
                        <side-item icon="folder" sep>Alınan Siparişten Seç</side-item>
                        <side-item icon="factory" sep>Gerçekleşen Gir</side-item>
                        <side-item icon="calc" sep>Hesapla</side-item>
                        <side-item icon="expand">Hepsini Genişlet</side-item>
                        <side-item icon="collapse" h="20" last>Hepsini Daralt</side-item>
                    </side-panel>
                    <div class="grip"><svg width="4" height="8" viewBox="0 0 4 8"><path d="M4 0v8L0 4z" fill="currentColor"/></svg></div>
                    <div class="main">
                        <tab-strip>
                            <tab-item>Genel Bilgiler</tab-item>
                            <tab-item>Stok Bilgileri</tab-item>
                            <tab-item>Bağlı İşlemler</tab-item>
                            <tab-item active>Gerçekleşen</tab-item>
                            <tab-item>Açıklama</tab-item>
                            <tab-item>İmalat Notu</tab-item>
                            <tab-item>Serbest Alanlar</tab-item>
                        </tab-strip>
                        <div class="panel">
                            <data-grid config="upper" h="303" foot><grid-nav pos="1 / 7"></grid-nav></data-grid>
                            <split-bar></split-bar>
                            <div class="lower">
                                <tab-strip>
                                    <tab-item active low>Stok Asıl Bilgileri</tab-item>
                                    <tab-item>Bağlı Çeki</tab-item>
                                </tab-strip>
                                <div class="sub">
                                    <data-grid config="lower" h="199" bg="#fff"><grid-nav pos="1 / 2" dim></grid-nav></data-grid>
                                </div>
                            </div>
                        </div>
                    </div>
                </div>
            </div>`;
    }
}
customElements.define("app-window", AppWindow);
</script>
</body>
</html>
